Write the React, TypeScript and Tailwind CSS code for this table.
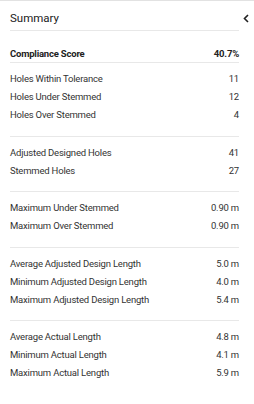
import React from "react";

const groups: [string, string][][] = [
  [
    ["Holes Within Tolerance", "11"],
    ["Holes Under Stemmed", "12"],
    ["Holes Over Stemmed", "4"],
  ],
  [
    ["Adjusted Designed Holes", "41"],
    ["Stemmed Holes", "27"],
  ],
  [
    ["Maximum Under Stemmed", "0.90 m"],
    ["Maximum Over Stemmed", "0.90 m"],
  ],
  [
    ["Average Adjusted Design Length", "5.0 m"],
    ["Minimum Adjusted Design Length", "4.0 m"],
    ["Maximum Adjusted Design Length", "5.4 m"],
  ],
  [
    ["Average Actual Length", "4.8 m"],
    ["Minimum Actual Length", "4.1 m"],
    ["Maximum Actual Length", "5.9 m"],
  ],
];

export default function App() {
  return (
    <div
      className="relative w-[254px] h-[404px] bg-white border-t border-[#e2e2e2] text-[#333333]"
      style={{ fontFamily: "Roboto, 'Liberation Sans', sans-serif" }}
    >
      <div className="ml-[10px] mr-[15px]">
        <div className="h-[30px] pt-[9px] border-b border-[#e8e8e8] text-[11.5px] leading-[17px] text-[#212121]">
          Summary
        </div>
        <div className="pt-[14px] h-[32px] border-b border-[#e8e8e8] flex justify-between text-[9.5px] tracking-[-0.2px] leading-[18px] font-bold text-[#222222]">
          <span>Compliance Score</span>
          <span>40.7%</span>
        </div>
        {groups.map((g, i) => (
          <div
            key={i}
            className={
              "pt-[7px] pb-[11.5px] " +
              (i < groups.length - 1 ? "border-b border-[#e8e8e8]" : "")
            }
          >
            {g.map(([k, v]) => (
              <div
                key={k}
                className="flex justify-between h-[18px] text-[9.5px] tracking-[-0.2px] leading-[18px]"
              >
                <span>{k}</span>
                <span>{v}</span>
              </div>
            ))}
          </div>
        ))}
      </div>
      <svg
        className="absolute right-[5px] top-[13px]"
        width="6"
        height="9"
        viewBox="0 0 6 9"
        fill="none"
      >
        <path d="M5 1 L1.5 4.5 L5 8" stroke="#212121" strokeWidth="1.6" />
      </svg>
    </div>
  );
}
